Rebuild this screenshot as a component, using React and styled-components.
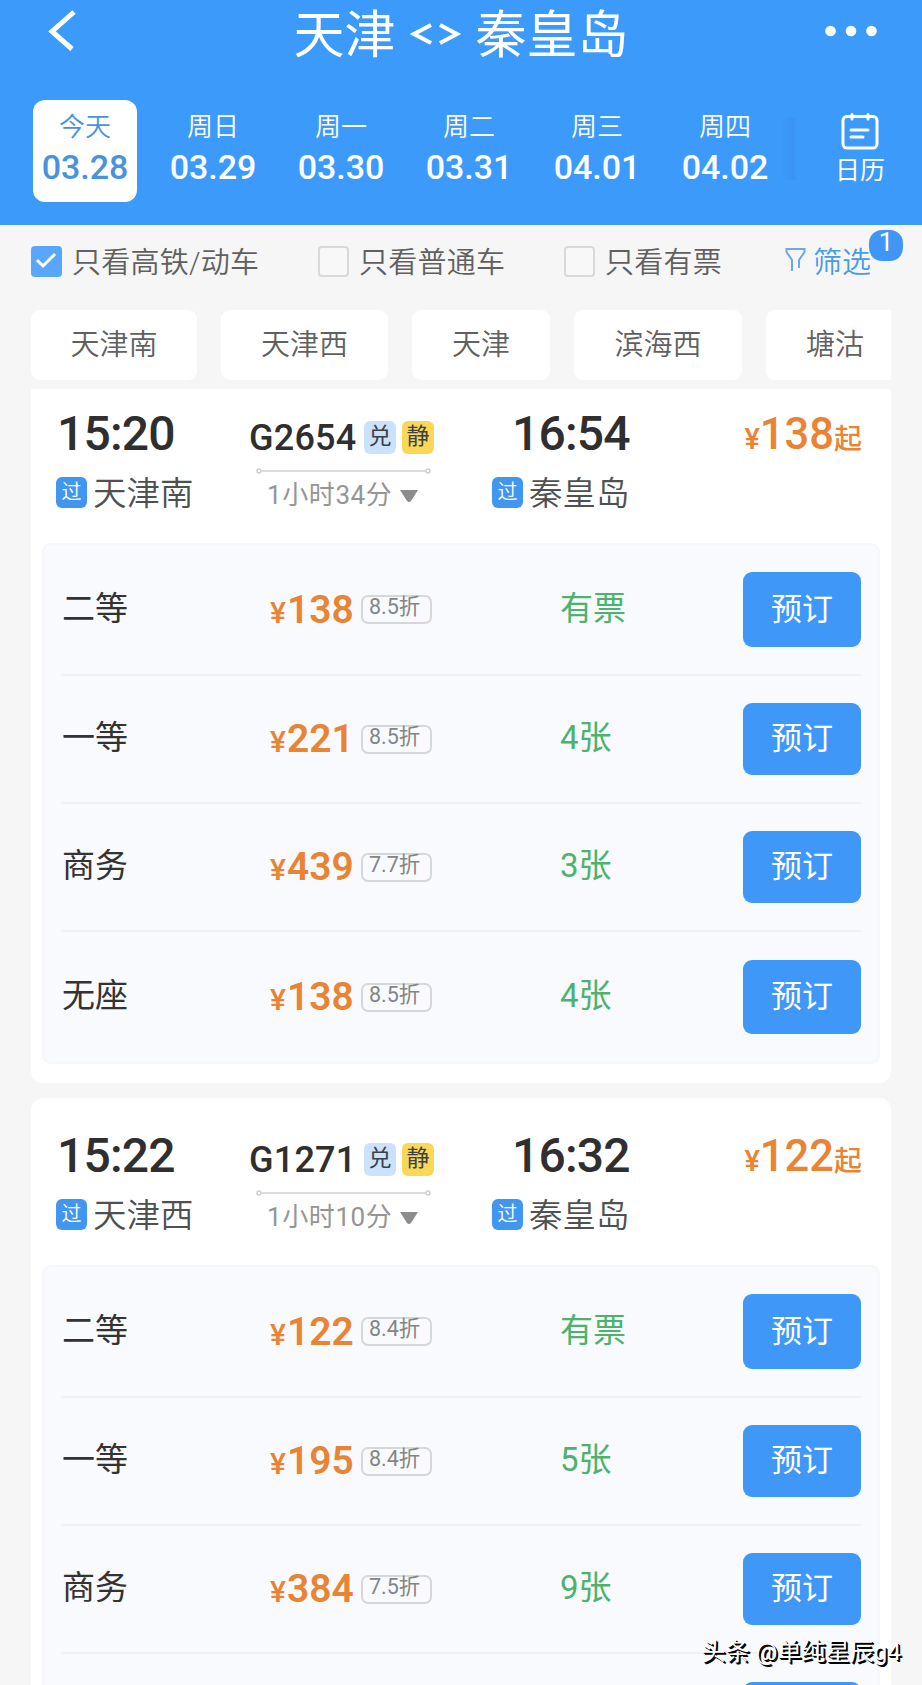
import React, { useState } from "react";
import styled, { createGlobalStyle } from "styled-components";

const GlobalStyle = createGlobalStyle`
  * {
    box-sizing: border-box;
  }
  body {
    margin: 0;
    background: #f6f6f6;
    font-family: Roboto, "Noto Sans CJK SC", sans-serif;
    overflow: hidden;
  }
  button {
    font-family: inherit;
    border: 0;
    padding: 0;
    background: none;
  }
`;

const Page = styled.div`
  position: relative;
  width: 922px;
  height: 1685px;
  overflow: hidden;
  background: #f6f6f6;
`;

const Header = styled.header`
  height: 225px;
  background: #3c9afb;
  color: #fff;
`;
const TitleBar = styled.div`
  display: grid;
  grid-template-columns: 200px 1fr 200px;
  height: 100px;
`;
const BackIcon = styled.svg`
  width: 32px;
  height: 44px;
  margin: 9px 0 0 46px;
`;
const MoreIcon = styled.svg`
  width: 56px;
  height: 12px;
  margin: 25px 45px 0 auto;
`;
const Title = styled.h1`
  display: flex;
  justify-content: center;
  gap: 14px;
  margin: 0;
  padding-top: 5px;
  font-size: 51px;
  font-weight: 400;
  line-height: 62px;
  white-space: nowrap;
`;
const SwapIcon = styled.svg`
  width: 52px;
  height: 26px;
  margin-top: 16px;
`;

const DateBar = styled.div`
  display: flex;
  padding-left: 33px;
`;
const DateItem = styled.button`
  display: flex;
  flex-direction: column;
  align-items: center;
  justify-content: flex-start;
  width: 104px;
  height: 102px;
  margin-right: 24px;
  padding-top: 9px;
  border-radius: 12px;
  background: ${props => (props.$active ? "#fff" : "transparent")};
  color: ${props => (props.$active ? "#4793dc" : "#fff")};
`;
const WeekDay = styled.div`
  font-size: 26px;
  font-weight: 350;
  line-height: 36px;
`;
const DayNumber = styled.div`
  font-size: 34px;
  font-weight: 500;
  line-height: 44px;
`;
const CalendarShade = styled.div`
  width: 16px;
  height: 62px;
  margin: 18px 38px 0 -20px;
  background: linear-gradient(90deg, rgba(50, 130, 225, 0), rgba(50, 130, 225, 0.3) 80%, rgba(50, 130, 225, 0));
`;
const CalendarButton = styled.button`
  display: flex;
  flex-direction: column;
  align-items: center;
  width: 50px;
  padding-top: 12px;
  color: #fff;
  font-size: 25px;
  line-height: 38px;
`;

const FilterBar = styled.div`
  display: flex;
  align-items: center;
  height: 73px;
  padding-left: 31px;
  color: #606060;
  font-size: 29px;
  font-weight: 350;
  white-space: nowrap;
`;
const CheckItem = styled.label`
  display: flex;
  align-items: center;
  gap: 10px;
  width: ${props => props.$width}px;
`;
const CheckText = styled.span`
  padding-bottom: 3px;
  letter-spacing: 0.25px;
`;
const CheckBox = styled.span`
  width: 31px;
  height: 31px;
  border: ${props => (props.$checked ? "0" : "2px solid #d9d9d9")};
  border-radius: 4px;
  background: ${props => (props.$checked ? "#59a7fa" : "#f8f8f8")};
`;
const FilterButton = styled.button`
  position: relative;
  display: flex;
  align-items: center;
  gap: 7px;
  padding-bottom: 3px;
  color: #4a9be6;
  font-size: 29px;
  font-weight: 350;
`;
const Badge = styled.span`
  position: absolute;
  left: 84px;
  top: -9px;
  width: 34px;
  height: 31px;
  border-radius: 13px;
  background: #3f96f5;
  color: #fff;
  font-size: 26px;
  font-weight: 400;
  line-height: 25px;
  text-align: center;
`;

const StationTabs = styled.div`
  display: flex;
  gap: 24px;
  margin: 12px 31px 9px;
  overflow: hidden;
`;
const StationTab = styled.button`
  flex: none;
  width: ${props => props.$width}px;
  height: 70px;
  padding: 0 0 6px;
  border-radius: 9px;
  background: #fff;
  color: #606060;
  font-size: 29px;
  font-weight: 350;
`;

const Card = styled.section`
  margin: 0 31px 15px;
  padding: ${props => (props.$first ? "0" : "13px")} 11px 19px;
  border-radius: ${props => (props.$first ? "0 0 12px 12px" : "12px")};
  background: #fff;
`;
const TrainInfo = styled.div`
  display: grid;
  grid-template-columns: 193px 243px 210px 1fr;
  height: 154px;
  padding: 15px 18px 0 14px;
`;
const Time = styled.div`
  padding-left: ${props => (props.$arrive ? 20 : 1)}px;
  color: #2f2f2f;
  font-size: 48px;
  font-weight: 500;
  line-height: 60px;
  letter-spacing: -0.8px;
`;
const Station = styled.div`
  display: flex;
  align-items: center;
  gap: 6px;
  margin-top: 4px;
  color: #505050;
  font-size: 33.5px;
  font-weight: 350;
  line-height: 48px;
`;
const StationName = styled.span`
  padding-top: 3px;
  line-height: 45px;
`;
const PassTag = styled.span`
  width: 31px;
  height: 31px;
  border-radius: 6px;
  background: #4196f0;
  color: #fff;
  font-size: 20px;
  line-height: 30px;
  text-align: center;
`;
const TrainNo = styled.div`
  display: flex;
  align-items: center;
  height: 66px;
  color: #2f2f2f;
  font-size: 36px;
  font-weight: 500;
`;
const TrainCode = styled.span`
  width: 115px;
  padding-top: 2px;
  letter-spacing: 0.2px;
`;
const Tag = styled.span`
  width: 32px;
  height: 33px;
  margin-right: 6px;
  border-radius: 6px;
  background: ${props => props.$bg};
  color: #3a4048;
  font-size: 23px;
  font-weight: 400;
  line-height: 32px;
  text-align: center;
`;
const RouteLine = styled.svg`
  display: block;
  width: 176px;
  height: 6px;
  margin: -2px 0 1px 7px;
`;
const Duration = styled.div`
  display: flex;
  align-items: center;
  gap: 8px;
  padding-left: 18px;
  color: #959595;
  font-size: 26px;
  font-weight: 400;
  line-height: 40px;
  letter-spacing: 0.6px;
  white-space: nowrap;
`;
const LowPrice = styled.div`
  display: flex;
  align-items: baseline;
  justify-content: flex-end;
  padding-top: 1px;
  color: #e88434;
  font-size: 43.5px;
  font-weight: 500;
  line-height: 60px;
`;
const Yen = styled.span`
  margin-right: ${props => props.$gap || 0}px;
  padding-bottom: 1px;
  font-size: ${props => props.$size}px;
  font-weight: 500;
`;
const From = styled.span`
  font-size: 28px;
`;

const SeatPanel = styled.div`
  padding: 0 17px;
  border: 2px solid #f6f7fb;
  border-radius: 9px;
  background: #f9fafe;
`;
const SeatRow = styled.div`
  display: grid;
  grid-template-columns: 209px 290px 183px 118px;
  align-items: center;
  height: ${props => props.$height}px;
  border-bottom: ${props => (props.$last ? "0" : "2px solid #f0f1f5")};
`;
const SeatName = styled.div`
  padding: 0 0 8px 1px;
  color: #333;
  font-size: 33px;
  font-weight: 400;
`;
const SeatPrice = styled.div`
  display: flex;
  align-items: center;
`;
const Amount = styled.div`
  display: flex;
  align-items: baseline;
  width: 91px;
  color: #e88434;
  font-size: 39px;
  font-weight: 600;
`;
const Discount = styled.span`
  width: 71px;
  height: 29px;
  padding-left: 6px;
  border: 2px solid #d5d7da;
  border-radius: 7px;
  color: #858585;
  font-size: 21.5px;
  line-height: 20px;
  white-space: nowrap;
`;
const Remain = styled.div`
  padding-bottom: 8px;
  color: #4cb26c;
  font-size: 33px;
  font-weight: 400;
`;
const BookButton = styled.button`
  width: 118px;
  height: ${props => props.$height}px;
  padding-bottom: 7px;
  border-radius: 9px;
  background: #3f98f8;
  color: #fff;
  font-size: 31px;
  font-weight: 400;
`;

const Watermark = styled.div`
  position: absolute;
  right: 21px;
  bottom: 16px;
  color: #fff;
  font-size: 24px;
  line-height: 34px;
  letter-spacing: 0.1px;
  text-shadow: 1px 1px 0 #000, 2px 2px 0 #000;
`;

const dates = [
  { week: "今天", day: "03.28" },
  { week: "周日", day: "03.29" },
  { week: "周一", day: "03.30" },
  { week: "周二", day: "03.31" },
  { week: "周三", day: "04.01" },
  { week: "周四", day: "04.02" },
];

const filters = [
  { label: "只看高铁/动车", width: 287 },
  { label: "只看普通车", width: 246 },
  { label: "只看有票", width: 221 },
];

const stations = [
  { name: "天津南", width: 166 },
  { name: "天津西", width: 167 },
  { name: "天津", width: 138 },
  { name: "滨海西", width: 168 },
  { name: "塘沽", width: 138 },
];

const trains = [
  {
    code: "G2654",
    start: "15:20",
    end: "16:54",
    from: "天津南",
    to: "秦皇岛",
    duration: "1小时34分",
    price: 138,
    seats: [
      { name: "二等", price: 138, discount: "8.5折", remain: "有票" },
      { name: "一等", price: 221, discount: "8.5折", remain: "4张" },
      { name: "商务", price: 439, discount: "7.7折", remain: "3张" },
      { name: "无座", price: 138, discount: "8.5折", remain: "4张" },
    ],
  },
  {
    code: "G1271",
    start: "15:22",
    end: "16:32",
    from: "天津西",
    to: "秦皇岛",
    duration: "1小时10分",
    price: 122,
    seats: [
      { name: "二等", price: 122, discount: "8.4折", remain: "有票" },
      { name: "一等", price: 195, discount: "8.4折", remain: "5张" },
      { name: "商务", price: 384, discount: "7.5折", remain: "9张" },
      { loading: true },
    ],
  },
];

// first and last rows are slightly taller than the ones between
const rowHeights = [131, 128, 128, 130];
const buttonHeights = [75, 72, 72, 74];

function TrainCard({ train, first }) {
  return (
    <Card $first={first}>
      <TrainInfo>
        <div>
          <Time>{train.start}</Time>
          <Station><PassTag>过</PassTag><StationName>{train.from}</StationName></Station>
        </div>
        <div>
          <TrainNo>
            <TrainCode>{train.code}</TrainCode>
            <Tag $bg="#cce2fc">兑</Tag>
            <Tag $bg="#fad857">静</Tag>
          </TrainNo>
          <RouteLine viewBox="0 0 176 6" fill="none" stroke="#cfcfcf" strokeWidth="1.5">
            <circle cx="3" cy="3" r="2" />
            <circle cx="172" cy="3" r="2" />
            <path d="M5 3H170" />
          </RouteLine>
          <Duration>
            {train.duration}
            <svg width="18" height="13" viewBox="0 0 18 13" fill="#8c8c8c">
              <path d="M0 1H18L11 12Q9 14 7 12Z" />
            </svg>
          </Duration>
        </div>
        <div>
          <Time $arrive>{train.end}</Time>
          <Station><PassTag>过</PassTag><StationName>{train.to}</StationName></Station>
        </div>
        <LowPrice>
          <Yen $size={29}>¥</Yen>{train.price}<From>起</From>
        </LowPrice>
      </TrainInfo>
      <SeatPanel>
        {train.seats.map((seat, index) => (
          <SeatRow key={index} $height={rowHeights[index]} $last={index === train.seats.length - 1}>
            <SeatName>{seat.name}</SeatName>
            <SeatPrice>
              {!seat.loading && (
                <>
                  <Amount><Yen $size={30} $gap={1}>¥</Yen>{seat.price}</Amount>
                  <Discount>{seat.discount}</Discount>
                </>
              )}
            </SeatPrice>
            <Remain>{seat.remain}</Remain>
            <BookButton $height={buttonHeights[index]}>{!seat.loading && "预订"}</BookButton>
          </SeatRow>
        ))}
      </SeatPanel>
    </Card>
  );
}

function App() {
  const [activeDate, setActiveDate] = useState(0);
  const [checked, setChecked] = useState([true, false, false]);

  const toggleFilter = (index) => {
    setChecked(checked.map((value, i) => (i === index ? !value : value)));
  };

  return (
    <>
      <GlobalStyle />
      <Page>
        <Header>
          <TitleBar>
            <BackIcon viewBox="0 0 32 44" fill="none" stroke="#fff" strokeWidth="5">
              <path d="M28 3L6 22.500L26 40" />
            </BackIcon>
            <Title>
              <span>天津</span>
              <SwapIcon viewBox="0 0 52 26" fill="none" stroke="#fff" strokeWidth="4">
                <path d="M21 4L4 13L21 22M30 4L47 13L30 22" />
              </SwapIcon>
              <span>秦皇岛</span>
            </Title>
            <MoreIcon viewBox="0 0 56 12" fill="#fff">
              <circle cx="9.500" cy="6" r="5.300" />
              <circle cx="30" cy="6" r="5.300" />
              <circle cx="50.500" cy="6" r="5.300" />
            </MoreIcon>
          </TitleBar>
          <DateBar>
            {dates.map((item, index) => (
              <DateItem key={item.day} $active={index === activeDate} onClick={() => setActiveDate(index)}>
                <WeekDay>{item.week}</WeekDay>
                <DayNumber>{item.day}</DayNumber>
              </DateItem>
            ))}
            <CalendarShade />
            <CalendarButton>
              <svg width="38" height="40" viewBox="0 0 38 40" fill="none" stroke="#fff" strokeWidth="3" strokeLinecap="round">
                <rect x="2" y="4.500" width="34" height="31.500" rx="4" />
                <path d="M11 2.500V7M27 2.500V7M10 18H27M10 25H22" />
              </svg>
              日历
            </CalendarButton>
          </DateBar>
        </Header>

        <FilterBar>
          {filters.map((item, index) => (
            <CheckItem key={item.label} $width={item.width} onClick={() => toggleFilter(index)}>
              <CheckBox $checked={checked[index]}>
                {checked[index] && (
                  <svg width="31" height="31" viewBox="0 0 31 31" fill="none" stroke="#fff" strokeWidth="3">
                    <path d="M6 14L12 20L24 8" />
                  </svg>
                )}
              </CheckBox>
              <CheckText>{item.label}</CheckText>
            </CheckItem>
          ))}
          <FilterButton>
            <svg width="21" height="26" viewBox="0 0 21 26" fill="none" stroke="#6ba6ee" strokeWidth="2">
              <path d="M7 24V13L1.500 5V2H19.500V5L14 13V21" />
            </svg>
            筛选
            <Badge>1</Badge>
          </FilterButton>
        </FilterBar>

        <StationTabs>
          {stations.map((item) => (
            <StationTab key={item.name} $width={item.width}>{item.name}</StationTab>
          ))}
        </StationTabs>

        {trains.map((train, index) => (
          <TrainCard key={train.code} train={train} first={index === 0} />
        ))}

        <Watermark>头条 @单纯星辰g4</Watermark>
      </Page>
    </>
  );
}

export default App;
